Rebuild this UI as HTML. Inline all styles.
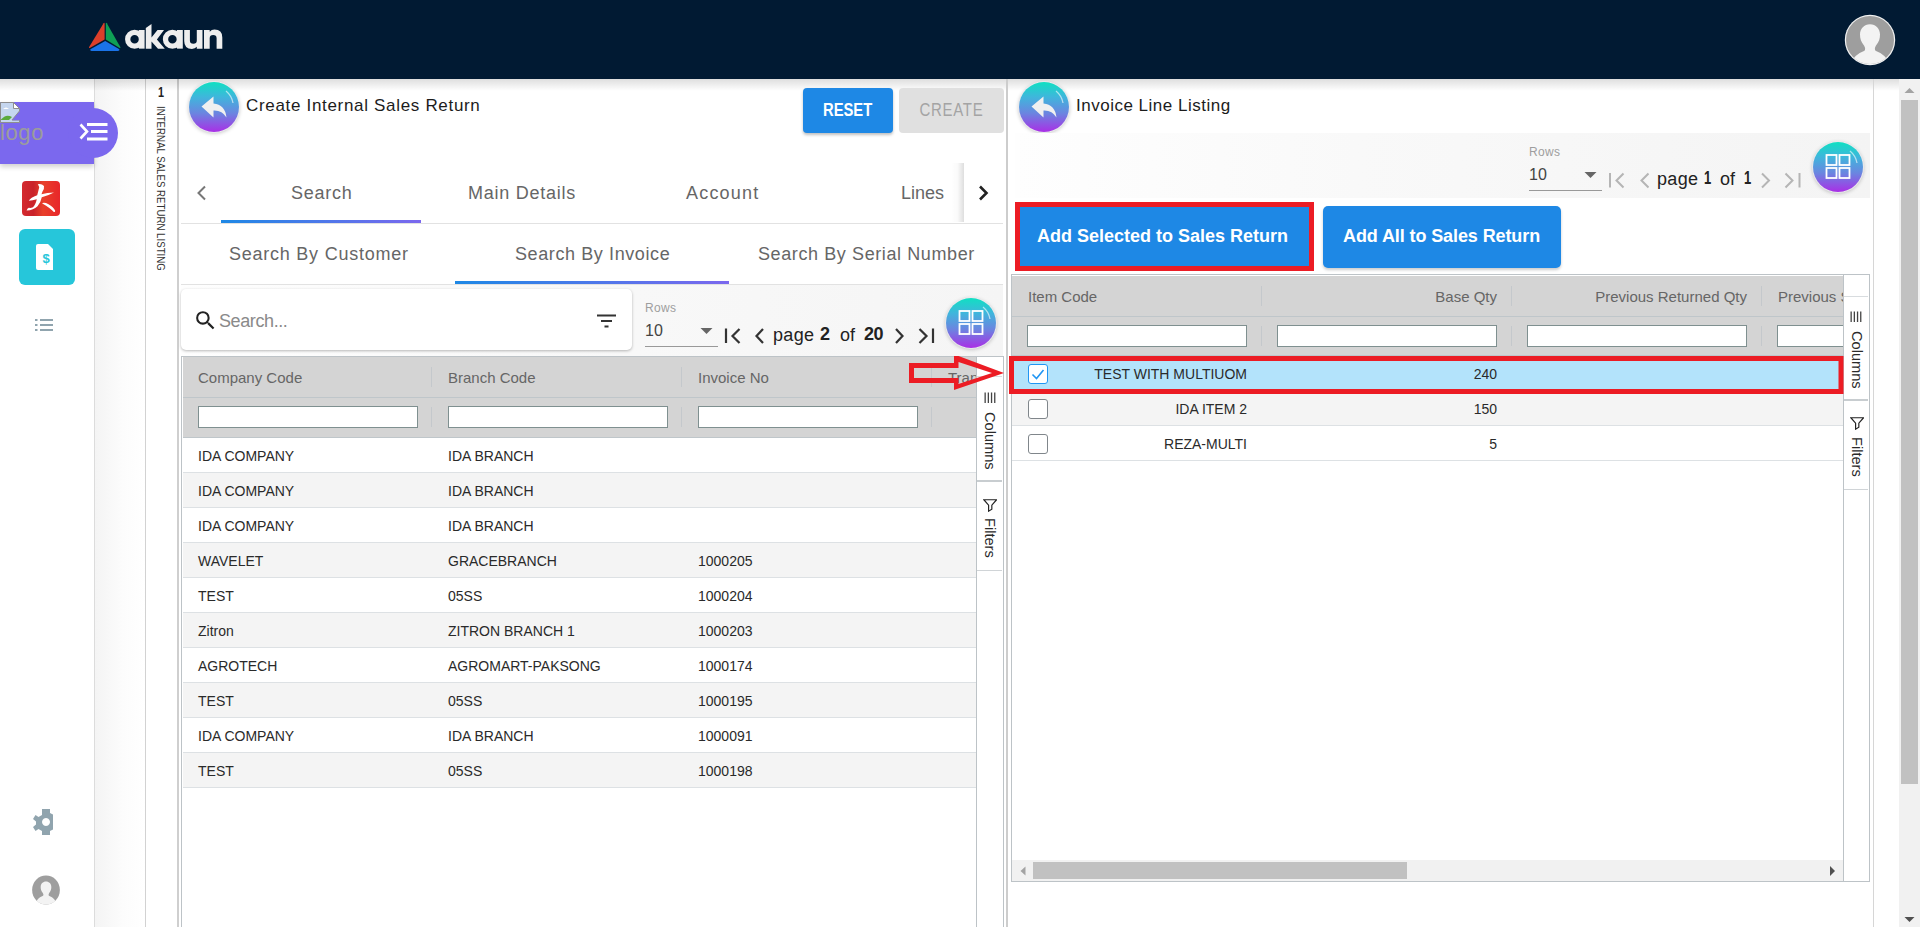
<!DOCTYPE html>
<html><head><meta charset="utf-8">
<style>
*{box-sizing:border-box;margin:0;padding:0}
html,body{width:1920px;height:927px;overflow:hidden;background:#fff;font-family:"Liberation Sans",sans-serif;position:relative}
.a{position:absolute}
.t{position:absolute;white-space:nowrap;line-height:1}
</style></head><body>

<!-- HEADER -->
<div class="a" style="left:0;top:0;width:1920px;height:79px;background:#011a33"></div>
<svg class="a" style="left:0;top:0" width="240" height="79" viewBox="0 0 240 79">
  <path d="M103.6 23.2 Q104.6 22 104.6 23.8 L104.6 39.4 L90.2 47.8 Q88.4 48.6 89.1 46.9 Z" fill="#dc3f2a"/>
  <path d="M105.8 23.8 Q105.8 22 106.8 23.2 L120.3 46.9 Q121 48.6 119.2 47.8 L105.8 39.6 Z" fill="#0fa055"/>
  <path d="M105.2 40.9 L119.4 49.2 Q119.8 50.9 118 50.9 L91.6 50.9 Q89.8 50.9 90.4 49.2 Z" fill="#1a73e8"/>
  <g fill="#eeeeee">
    <circle cx="134.6" cy="39.3" r="6.9" stroke="#eeeeee" stroke-width="5.3" fill="none"/>
    <rect x="138.9" y="30" width="5.7" height="18.65"/>
    <path d="M145.8 28 L151.5 24 L151.5 37.5 L157.5 30 L164 30 L156.9 39.6 L164.8 48.65 L158 48.65 L151.5 41.5 L151.5 48.65 L145.8 48.65 Z"/>
    <circle cx="172.4" cy="39.3" r="6.9" stroke="#eeeeee" stroke-width="5.3" fill="none"/>
    <rect x="177" y="30" width="5.8" height="18.65"/>
    <path d="M184.2 30 H189.9 V40.5 Q189.9 43.8 193.35 43.8 Q196.8 43.8 196.8 40.5 V30 H202.5 V48.65 H196.8 V46.8 Q195 48.9 192 48.9 Q184.2 48.9 184.2 41 Z"/>
    <path d="M204 48.65 H209.7 V38.2 Q209.7 34.9 213.15 34.9 Q216.6 34.9 216.6 38.2 V48.65 H222.3 V37.5 Q222.3 29.6 214.5 29.6 Q211.5 29.6 209.7 31.8 V30 H204 Z"/>
  </g>
</svg>
<svg class="a" style="left:1840px;top:10px" width="60" height="60" viewBox="1840 10 60 60">
  <defs><clipPath id="avc"><circle cx="1870" cy="40" r="24"/></clipPath></defs>
  <circle cx="1870" cy="40" r="25.2" fill="#f2f2f2"/>
  <circle cx="1870" cy="40" r="24" fill="#9e9e9e"/>
  <path clip-path="url(#avc)" fill="#f3f3f3" d="M1849 72 Q1850 56 1864.5 50.8 Q1866 48.5 1864 45.5 C1861 42 1860 38.5 1860 34.5 C1860 28.5 1864.2 24.2 1870 24.2 C1875.8 24.2 1880 28.5 1880 34.5 C1880 38.5 1879 42 1876 45.5 Q1874 48.5 1875.5 50.8 Q1890 56 1891 72 Z"/>
</svg>

<!-- LEFT SIDEBAR -->
<div class="a" style="left:94px;top:79px;width:1px;height:848px;background:#dcdcdc"></div>
<div class="a" style="left:95px;top:79px;width:50px;height:848px;background:linear-gradient(to right,#f4f4f4,#fcfcfc 55%,#fff)"></div>
<div class="a" style="left:145px;top:79px;width:1px;height:848px;background:#d2d2d2"></div>
<div class="a" style="left:177px;top:79px;width:2px;height:848px;background:#cfcfcf"></div>

<!-- top shadow under header -->
<div class="a" style="left:0;top:79px;width:1899px;height:12px;background:linear-gradient(to bottom,rgba(0,0,0,.13),rgba(0,0,0,0))"></div>

<!-- purple menu tab -->
<div class="a" style="left:0;top:102px;width:94px;height:62px;background:#7b68ee;box-shadow:0 3px 5px rgba(0,0,0,.18)"></div>
<div class="a" style="left:68px;top:108px;width:50px;height:50px;border-radius:50%;background:#7b68ee"></div>
<svg class="a" style="left:0;top:102px" width="21" height="21" viewBox="0 0 21 21">
  <path d="M0.5 0.5 H13.5 L19.5 6.5 V9 L12 18 L19.5 18 V20.5 H0.5 Z" fill="#c5d6ef" stroke="#8e8e8e" stroke-width="1"/>
  <path d="M13.5 0.5 V6.5 H19.5 Z" fill="#fff" stroke="#8e8e8e" stroke-width="1"/>
  <path d="M3 7 Q6 4 9 7 Z" fill="#fff"/>
  <path d="M1 17.5 Q6 11.5 12 15 L9 18 L1 18 Z" fill="#5aaa3c"/>
  <path d="M19.5 10 L12.5 18.3 L19.5 18.3 Z" fill="#7b68ee"/>
</svg>
<div class="t" style="left:0;top:122px;font-size:22px;color:#9c9c9c;letter-spacing:0.6px">logo</div>
<svg class="a" style="left:78px;top:122px" width="30" height="20" viewBox="0 0 30 20">
  <path d="M2.5 2.5 L9 9.5 L2.5 16.5" stroke="#fff" stroke-width="2.6" fill="none"/>
  <rect x="9" y="1" width="20.5" height="3" fill="#fff"/>
  <rect x="13" y="8" width="16.5" height="3" fill="#fff"/>
  <rect x="9" y="15.5" width="20.5" height="3" fill="#fff"/>
</svg>

<!-- sidebar icons -->
<div class="a" style="left:22px;top:181px;width:38px;height:35px;border-radius:4px;background:linear-gradient(to right,#d42a2f,#c9222a 30%,#e8402a 55%,#e8262a)"></div>
<svg class="a" style="left:22px;top:181px" width="38" height="35" viewBox="0 0 38 35">
  <path fill="#fff" d="M15.8 3.2 Q19.5 2.2 22 5 Q22.5 7.5 20.5 10.5 L19.5 13.2 Q25 11.8 32 11.6 Q27.5 14.2 19.8 16.2 Q18.8 21.5 15.5 25.2 Q11.5 29 4.6 29.6 Q5.2 27.3 6.8 26.8 Q8.8 27.2 10.5 26.5 Q13.5 24.2 14.8 18.2 Q10.5 19.2 6.8 19.8 Q8.5 16.5 15.2 14.2 Q16.5 9.5 17.2 6.2 Q16.8 4.5 15.8 3.2 Z"/>
  <path fill="#fff" d="M20 22.2 Q22.5 21.2 26.5 23.2 Q31.5 25.8 33.2 29.8 Q33.2 31.5 31.8 31 Q28.5 27.2 20 22.2 Z"/>
</svg>
<div class="a" style="left:19px;top:229px;width:56px;height:56px;border-radius:6px;background:#26c6da"></div>
<svg class="a" style="left:36px;top:244px" width="17" height="26" viewBox="0 0 17 26">
  <path d="M2 0 L12 0 L17 5 L17 26 L2 26 Q0 26 0 24 L0 2 Q0 0 2 0 Z" fill="#fff"/>
  <text x="10" y="18.5" font-family="Liberation Sans" font-weight="700" font-size="13" fill="#26c6da" text-anchor="middle">$</text>
</svg>
<svg class="a" style="left:35px;top:318px" width="18" height="14" viewBox="0 0 18 14">
  <rect x="0" y="1" width="2.5" height="2" fill="#90a4ae"/><rect x="5" y="1" width="13" height="2" fill="#90a4ae"/>
  <rect x="0" y="6" width="2.5" height="2" fill="#90a4ae"/><rect x="5" y="6" width="13" height="2" fill="#90a4ae"/>
  <rect x="0" y="11" width="2.5" height="2" fill="#90a4ae"/><rect x="5" y="11" width="13" height="2" fill="#90a4ae"/>
</svg>
<svg class="a" style="left:33px;top:809px" width="20" height="26" viewBox="0 0 20 26">
  <path fill="#90a4ae" fill-rule="evenodd" d="M9 0 h8 v4 l3 1.5 v15 l-3 1.5 v4 h-8 v-4 l-3.5 -2 -3 2 -2.5 -4 3 -2.5 v-3 l-3 -2.5 2.5 -4 3 2 3.5 -2 z M13 9 a4 4 0 1 0 0.01 0 z"/>
</svg>
<svg class="a" style="left:30px;top:874px" width="32" height="32" viewBox="1840 10 60 60">
  <defs><clipPath id="avc2"><circle cx="1870" cy="40" r="27"/></clipPath></defs>
  <ellipse cx="1870" cy="40" rx="26" ry="27" fill="#9e9e9e"/>
  <path clip-path="url(#avc2)" fill="#f3f3f3" d="M1849 72 Q1850 56 1864.5 50.8 Q1866 48.5 1864 45.5 C1861 42 1860 38.5 1860 34.5 C1860 28.5 1864.2 24.2 1870 24.2 C1875.8 24.2 1880 28.5 1880 34.5 C1880 38.5 1879 42 1876 45.5 Q1874 48.5 1875.5 50.8 Q1890 56 1891 72 Z"/>
</svg>

<!-- vertical tab text -->
<div class="t" style="left:157.5px;top:84px;font-size:15px;font-weight:700;color:#222;transform-origin:0 0;transform:scaleX(0.72)">1</div>
<div class="t" style="left:166px;top:106px;font-size:11px;color:#333;transform-origin:0 0;transform:rotate(90deg) scaleX(0.88)">INTERNAL SALES RETURN LISTING</div>

<!-- LEFT PANEL -->

<!-- back button left -->
<div class="a" style="left:189px;top:82px;width:50px;height:50px;border-radius:50%;background:linear-gradient(to bottom,#10e0c2 0%,#3fb6dc 30%,#6a86e0 62%,#a92fe6 100%);box-shadow:0 0 0 1px rgba(235,235,240,.9),0 1px 4px rgba(0,0,0,.3)"></div>
<svg class="a" style="left:189px;top:82px" width="50" height="50" viewBox="0 0 50 50">
  <path d="M37 9 A 20 20 0 0 1 44 21" stroke="rgba(255,255,255,.6)" stroke-width="1.3" fill="none"/>
  <path d="M24.5 14.5 L12.5 24.5 L24.5 35.5 L24.5 28.5 Q33 28 37.5 35.5 Q36 22.5 24.5 21.5 Z" fill="#f0f0f0"/>
</svg>
<div class="t" style="left:246px;top:97px;font-size:17px;color:#1c1c1c;letter-spacing:0.68px">Create Internal Sales Return</div>

<div class="a" style="left:803px;top:88px;width:90px;height:45px;border-radius:4px;background:#1e88e5;box-shadow:0 2px 3px rgba(0,0,0,.25)"></div>
<div class="t" style="left:823px;top:101px;font-size:18px;font-weight:700;color:#fff;transform-origin:0 0;transform:scaleX(0.82)">RESET</div>
<div class="a" style="left:899px;top:88px;width:105px;height:45px;border-radius:4px;background:#e0e0e0"></div>
<div class="t" style="left:919.5px;top:100.5px;font-size:15px;color:#a4a4a4;letter-spacing:0.7px;transform-origin:0 0;transform:scaleY(1.19)">CREATE</div>

<!-- tabs -->
<svg class="a" style="left:195px;top:185px" width="14" height="16" viewBox="0 0 14 16"><path d="M10 1.5 L3.5 8 L10 14.5" stroke="#777" stroke-width="2" fill="none"/></svg>
<div class="t" style="left:291px;top:184px;font-size:18px;color:#666;letter-spacing:0.75px">Search</div>
<div class="t" style="left:468px;top:184px;font-size:18px;color:#666;letter-spacing:0.75px">Main Details</div>
<div class="t" style="left:686px;top:184px;font-size:18px;color:#666;letter-spacing:1.2px">Account</div>
<div class="t" style="left:901px;top:184px;font-size:18px;color:#666;letter-spacing:0px">Lines</div>
<div class="a" style="left:951px;top:163px;width:13px;height:59px;background:linear-gradient(to right,rgba(0,0,0,0),rgba(0,0,0,.02) 50%,rgba(0,0,0,.13))"></div>
<svg class="a" style="left:976px;top:185px" width="14" height="16" viewBox="0 0 14 16"><path d="M4 1.5 L10.5 8 L4 14.5" stroke="#222" stroke-width="2.6" fill="none"/></svg>
<div class="a" style="left:221px;top:220px;width:200px;height:3px;background:linear-gradient(to right,#1e88e5,#7b68ee)"></div>
<div class="a" style="left:181px;top:223px;width:822px;height:1px;background:#e2e2e2"></div>

<div class="t" style="left:229px;top:245px;font-size:18px;color:#666;letter-spacing:0.76px">Search By Customer</div>
<div class="t" style="left:515px;top:245px;font-size:18px;color:#666;letter-spacing:0.6px">Search By Invoice</div>
<div class="t" style="left:758px;top:245px;font-size:18px;color:#666;letter-spacing:0.6px">Search By Serial Number</div>
<div class="a" style="left:455px;top:281px;width:274px;height:3px;background:linear-gradient(to right,#1e88e5,#7b68ee)"></div>
<div class="a" style="left:181px;top:284px;width:822px;height:1px;background:#e2e2e2"></div>

<!-- toolbar -->
<div class="a" style="left:181px;top:285px;width:822px;height:71px;background:linear-gradient(to right,#fefefe,#f9f9f9 40%,#f5f5f5)"></div>
<div class="a" style="left:181px;top:289px;width:451px;height:61px;border-radius:5px;background:#fff;box-shadow:0 1px 3px rgba(0,0,0,.28)"></div>
<svg class="a" style="left:193px;top:308px" width="25" height="25" viewBox="0 0 24 24"><path fill="#222" d="M15.5 14h-.79l-.28-.27A6.47 6.47 0 0 0 16 9.5 6.5 6.5 0 1 0 9.5 16c1.61 0 3.09-.59 4.23-1.57l.27.28v.79l5 4.99L20.49 19l-4.99-5zm-6 0C7.01 14 5 11.99 5 9.5S7.01 5 9.5 5 14 7.01 14 9.5 11.99 14 9.5 14z"/></svg>
<div class="t" style="left:219px;top:312px;font-size:18px;color:#8a8a8a;letter-spacing:-0.4px">Search...</div>
<svg class="a" style="left:597px;top:314px" width="20" height="14" viewBox="0 0 20 14"><rect x="0" y="0.5" width="19" height="2" fill="#333"/><rect x="4" y="6" width="11" height="2" fill="#333"/><rect x="7.5" y="11.5" width="4" height="2" fill="#333"/></svg>

<div class="t" style="left:645px;top:302px;font-size:12px;color:#9e9e9e;letter-spacing:0.3px">Rows</div>
<div class="t" style="left:645px;top:323px;font-size:16px;color:#444">10</div>
<svg class="a" style="left:700px;top:327px" width="14" height="8"><path d="M0.5 1 L12.5 1 L6.5 7 Z" fill="#666"/></svg>
<div class="a" style="left:645px;top:346px;width:73px;height:1px;background:#999"></div>
<svg class="a" style="left:722px;top:326px" width="220" height="20" viewBox="0 0 220 20">
  <g stroke="#333" stroke-width="2.2" fill="none">
    <path d="M4 2.5 V17"/><path d="M17.5 3 L10.5 10 L17.5 17"/>
    <path d="M41 3 L34.5 10 L41 17"/>
    <path d="M174 3 L180.5 10 L174 17"/>
    <path d="M197.5 3 L204.5 10 L197.5 17"/><path d="M211 2.5 V17"/>
  </g>
</svg>
<div class="t" style="left:773px;top:326px;font-size:18px;color:#222;letter-spacing:0.35px">page</div>
<div class="t" style="left:820px;top:325px;font-size:18px;font-weight:700;color:#222">2</div>
<div class="t" style="left:840px;top:326px;font-size:18px;color:#222">of</div>
<div class="t" style="left:864px;top:325px;font-size:18px;font-weight:700;color:#222;letter-spacing:-0.5px">20</div>
<div class="a" style="left:946px;top:298px;width:50px;height:50px;border-radius:50%;background:linear-gradient(to bottom,#10e0c2 0%,#3fb6dc 30%,#6a86e0 62%,#a92fe6 100%);box-shadow:0 0 0 1px rgba(235,235,240,.9),0 1px 4px rgba(0,0,0,.3)"></div>
<svg class="a" style="left:946px;top:298px" width="50" height="50" viewBox="0 0 50 50">
  <path d="M37 9 A 20 20 0 0 1 44 21" stroke="rgba(255,255,255,.6)" stroke-width="1.3" fill="none"/>
  <g stroke="#fff" stroke-width="1.8" fill="none"><rect x="13.5" y="13" width="10" height="10"/><rect x="26.5" y="13" width="10" height="10"/><rect x="13.5" y="26" width="10" height="10"/><rect x="26.5" y="26" width="10" height="10"/></g>
</svg>

<!-- LEFT GRID -->
<div class="a" style="left:181px;top:356px;width:823px;height:571px;border:1px solid #bdc3c7;border-bottom:none;background:#fff"></div>
<div class="a" style="left:183px;top:357px;width:794px;height:80px;background:#d4d4d4"></div>
<div class="a" style="left:183px;top:397px;width:794px;height:1px;background:#bfc6ca"></div>
<div class="a" style="left:183px;top:437px;width:794px;height:1px;background:#bfc6ca"></div>
<div class="t" style="left:198px;top:370px;font-size:15px;color:#666">Company Code</div>
<div class="t" style="left:448px;top:370px;font-size:15px;color:#666">Branch Code</div>
<div class="t" style="left:698px;top:370px;font-size:15px;color:#666">Invoice No</div>
<div class="t" style="left:948px;top:370px;font-size:15px;color:#666">Tran</div>
<div class="a" style="left:431px;top:367px;width:1px;height:20px;background:#c4c8cc"></div>
<div class="a" style="left:681px;top:367px;width:1px;height:20px;background:#c4c8cc"></div>
<div class="a" style="left:931px;top:367px;width:1px;height:20px;background:#c4c8cc"></div>
<div class="a" style="left:431px;top:407px;width:1px;height:20px;background:#c4c8cc"></div>
<div class="a" style="left:681px;top:407px;width:1px;height:20px;background:#c4c8cc"></div>
<div class="a" style="left:931px;top:407px;width:1px;height:20px;background:#c4c8cc"></div>
<div class="a" style="left:198px;top:406px;width:220px;height:22px;background:#fff;border:1px solid #7f9090"></div>
<div class="a" style="left:448px;top:406px;width:220px;height:22px;background:#fff;border:1px solid #7f9090"></div>
<div class="a" style="left:698px;top:406px;width:220px;height:22px;background:#fff;border:1px solid #7f9090"></div>
<div class="a" style="left:183px;top:438px;width:794px;height:34px;background:#fff"></div>
<div class="a" style="left:183px;top:472px;width:794px;height:1px;background:#dde1e4"></div>
<div class="t" style="left:198px;top:449px;font-size:14px;color:#2a2a2a">IDA COMPANY</div>
<div class="t" style="left:448px;top:449px;font-size:14px;color:#2a2a2a">IDA BRANCH</div>
<div class="a" style="left:183px;top:473px;width:794px;height:34px;background:#f4f4f4"></div>
<div class="a" style="left:183px;top:507px;width:794px;height:1px;background:#dde1e4"></div>
<div class="t" style="left:198px;top:484px;font-size:14px;color:#2a2a2a">IDA COMPANY</div>
<div class="t" style="left:448px;top:484px;font-size:14px;color:#2a2a2a">IDA BRANCH</div>
<div class="a" style="left:183px;top:508px;width:794px;height:34px;background:#fff"></div>
<div class="a" style="left:183px;top:542px;width:794px;height:1px;background:#dde1e4"></div>
<div class="t" style="left:198px;top:519px;font-size:14px;color:#2a2a2a">IDA COMPANY</div>
<div class="t" style="left:448px;top:519px;font-size:14px;color:#2a2a2a">IDA BRANCH</div>
<div class="a" style="left:183px;top:543px;width:794px;height:34px;background:#f4f4f4"></div>
<div class="a" style="left:183px;top:577px;width:794px;height:1px;background:#dde1e4"></div>
<div class="t" style="left:198px;top:554px;font-size:14px;color:#2a2a2a">WAVELET</div>
<div class="t" style="left:448px;top:554px;font-size:14px;color:#2a2a2a">GRACEBRANCH</div>
<div class="t" style="left:698px;top:554px;font-size:14px;color:#2a2a2a">1000205</div>
<div class="a" style="left:183px;top:578px;width:794px;height:34px;background:#fff"></div>
<div class="a" style="left:183px;top:612px;width:794px;height:1px;background:#dde1e4"></div>
<div class="t" style="left:198px;top:589px;font-size:14px;color:#2a2a2a">TEST</div>
<div class="t" style="left:448px;top:589px;font-size:14px;color:#2a2a2a">05SS</div>
<div class="t" style="left:698px;top:589px;font-size:14px;color:#2a2a2a">1000204</div>
<div class="a" style="left:183px;top:613px;width:794px;height:34px;background:#f4f4f4"></div>
<div class="a" style="left:183px;top:647px;width:794px;height:1px;background:#dde1e4"></div>
<div class="t" style="left:198px;top:624px;font-size:14px;color:#2a2a2a">Zitron</div>
<div class="t" style="left:448px;top:624px;font-size:14px;color:#2a2a2a">ZITRON BRANCH 1</div>
<div class="t" style="left:698px;top:624px;font-size:14px;color:#2a2a2a">1000203</div>
<div class="a" style="left:183px;top:648px;width:794px;height:34px;background:#fff"></div>
<div class="a" style="left:183px;top:682px;width:794px;height:1px;background:#dde1e4"></div>
<div class="t" style="left:198px;top:659px;font-size:14px;color:#2a2a2a">AGROTECH</div>
<div class="t" style="left:448px;top:659px;font-size:14px;color:#2a2a2a">AGROMART-PAKSONG</div>
<div class="t" style="left:698px;top:659px;font-size:14px;color:#2a2a2a">1000174</div>
<div class="a" style="left:183px;top:683px;width:794px;height:34px;background:#f4f4f4"></div>
<div class="a" style="left:183px;top:717px;width:794px;height:1px;background:#dde1e4"></div>
<div class="t" style="left:198px;top:694px;font-size:14px;color:#2a2a2a">TEST</div>
<div class="t" style="left:448px;top:694px;font-size:14px;color:#2a2a2a">05SS</div>
<div class="t" style="left:698px;top:694px;font-size:14px;color:#2a2a2a">1000195</div>
<div class="a" style="left:183px;top:718px;width:794px;height:34px;background:#fff"></div>
<div class="a" style="left:183px;top:752px;width:794px;height:1px;background:#dde1e4"></div>
<div class="t" style="left:198px;top:729px;font-size:14px;color:#2a2a2a">IDA COMPANY</div>
<div class="t" style="left:448px;top:729px;font-size:14px;color:#2a2a2a">IDA BRANCH</div>
<div class="t" style="left:698px;top:729px;font-size:14px;color:#2a2a2a">1000091</div>
<div class="a" style="left:183px;top:753px;width:794px;height:34px;background:#f4f4f4"></div>
<div class="a" style="left:183px;top:787px;width:794px;height:1px;background:#dde1e4"></div>
<div class="t" style="left:198px;top:764px;font-size:14px;color:#2a2a2a">TEST</div>
<div class="t" style="left:448px;top:764px;font-size:14px;color:#2a2a2a">05SS</div>
<div class="t" style="left:698px;top:764px;font-size:14px;color:#2a2a2a">1000198</div>

<!-- left grid side bar -->
<div class="a" style="left:976px;top:357px;width:27px;height:570px;background:#fff;border-left:1px solid #bdc3c7"></div>
<div class="a" style="left:977px;top:376px;width:25px;height:1px;background:#d8dcdf"></div>
<div class="a" style="left:977px;top:480px;width:25px;height:2px;background:#c8cdd0"></div>
<div class="a" style="left:977px;top:570px;width:25px;height:1px;background:#d0d4d7"></div>
<svg class="a" style="left:984px;top:392px" width="12" height="12" viewBox="0 0 12 12"><g fill="#444"><rect x="0.5" y="0.5" width="1.3" height="10.5"/><rect x="3.7" y="0.5" width="1.3" height="10.5"/><rect x="6.9" y="0.5" width="1.3" height="10.5"/><rect x="10.1" y="0.5" width="1.3" height="10.5"/></g></svg>
<div class="t" style="left:997px;top:412px;font-size:14.6px;color:#2a2a2a;transform-origin:0 0;transform:rotate(90deg)">Columns</div>
<svg class="a" style="left:983px;top:498px" width="14" height="14" viewBox="0 0 13 13"><path d="M0.8 1.6 L12.6 1.6 L8.2 6.6 L8.2 10.4 L5.2 12.2 L5.2 6.6 Z" stroke="#222" stroke-width="1.1" fill="none"/></svg>
<div class="t" style="left:997px;top:518px;font-size:14.6px;color:#2a2a2a;transform-origin:0 0;transform:rotate(90deg)">Filters</div>

<!-- panel separator -->
<div class="a" style="left:1006px;top:79px;width:2px;height:848px;background:#cdcdcd"></div>


<!-- RIGHT PANEL -->

<!-- back button right -->
<div class="a" style="left:1019px;top:82px;width:50px;height:50px;border-radius:50%;background:linear-gradient(to bottom,#10e0c2 0%,#3fb6dc 30%,#6a86e0 62%,#a92fe6 100%);box-shadow:0 0 0 1px rgba(235,235,240,.9),0 1px 4px rgba(0,0,0,.3)"></div>
<svg class="a" style="left:1019px;top:82px" width="50" height="50" viewBox="0 0 50 50">
  <path d="M37 9 A 20 20 0 0 1 44 21" stroke="rgba(255,255,255,.6)" stroke-width="1.3" fill="none"/>
  <path d="M24.5 14.5 L12.5 24.5 L24.5 35.5 L24.5 28.5 Q33 28 37.5 35.5 Q36 22.5 24.5 21.5 Z" fill="#f0f0f0"/>
</svg>
<div class="t" style="left:1076px;top:97px;font-size:17px;color:#1c1c1c;letter-spacing:0.5px">Invoice Line Listing</div>

<!-- toolbar -->
<div class="a" style="left:1015px;top:133px;width:855px;height:65px;background:linear-gradient(to right,#fefefe,#f9f9f9 40%,#f4f4f4)"></div>
<div class="t" style="left:1529px;top:146px;font-size:12px;color:#9e9e9e;letter-spacing:0.3px">Rows</div>
<div class="t" style="left:1529px;top:167px;font-size:16px;color:#444">10</div>
<svg class="a" style="left:1584px;top:171px" width="14" height="8"><path d="M0.5 1 L12.5 1 L6.5 7 Z" fill="#666"/></svg>
<div class="a" style="left:1529px;top:190px;width:73px;height:1px;background:#999"></div>
<svg class="a" style="left:1606px;top:170px" width="200" height="20" viewBox="0 0 200 20">
  <g stroke="#b5b5b5" stroke-width="2" fill="none">
    <path d="M4 3 V17.5"/><path d="M17.5 3.5 L10.5 10.5 L17.5 17.5"/>
    <path d="M42.5 3.5 L35.5 10.5 L42.5 17.5"/>
    <path d="M156 3.5 L163 10.5 L156 17.5"/>
    <path d="M179.5 3.5 L186.5 10.5 L179.5 17.5"/><path d="M193.5 3 V17.5"/>
  </g>
</svg>
<div class="t" style="left:1657px;top:170px;font-size:18px;color:#222;letter-spacing:0.35px">page</div>
<div class="t" style="left:1704px;top:169px;font-size:18px;font-weight:700;color:#222;transform-origin:0 0;transform:scaleX(0.72)">1</div>
<div class="t" style="left:1720px;top:170px;font-size:18px;color:#222">of</div>
<div class="t" style="left:1744px;top:169px;font-size:18px;font-weight:700;color:#222;transform-origin:0 0;transform:scaleX(0.72)">1</div>
<div class="a" style="left:1813px;top:142px;width:50px;height:50px;border-radius:50%;background:linear-gradient(to bottom,#10e0c2 0%,#3fb6dc 30%,#6a86e0 62%,#a92fe6 100%);box-shadow:0 0 0 1px rgba(235,235,240,.9),0 1px 4px rgba(0,0,0,.3)"></div>
<svg class="a" style="left:1813px;top:142px" width="50" height="50" viewBox="0 0 50 50">
  <path d="M37 9 A 20 20 0 0 1 44 21" stroke="rgba(255,255,255,.6)" stroke-width="1.3" fill="none"/>
  <g stroke="#fff" stroke-width="1.8" fill="none"><rect x="13.5" y="13" width="10" height="10"/><rect x="26.5" y="13" width="10" height="10"/><rect x="13.5" y="26" width="10" height="10"/><rect x="26.5" y="26" width="10" height="10"/></g>
</svg>

<!-- buttons -->
<div class="a" style="left:1020px;top:207px;width:289px;height:59px;background:#1e88e5"></div>
<div class="a" style="left:1015px;top:202px;width:299px;height:69px;border:5px solid #ec1c24"></div>
<div class="t" style="left:1037px;top:227px;font-size:18px;font-weight:700;color:#fff;letter-spacing:0px">Add Selected to Sales Return</div>
<div class="a" style="left:1323px;top:206px;width:238px;height:62px;border-radius:5px;background:#1e88e5;box-shadow:0 2px 3px rgba(0,0,0,.2)"></div>
<div class="t" style="left:1343px;top:227px;font-size:18px;font-weight:700;color:#fff;letter-spacing:-0.1px">Add All to Sales Return</div>

<!-- RIGHT GRID -->
<div class="a" style="left:1011px;top:274px;width:859px;height:608px;border:1px solid #bdc3c7;background:#fff"></div>
<div class="a" style="left:1012px;top:276px;width:832px;height:80px;background:#d4d4d4"></div>
<div class="a" style="left:1012px;top:316px;width:832px;height:1px;background:#bfc6ca"></div>
<div class="a" style="left:1012px;top:355px;width:832px;height:1px;background:#bfc6ca"></div>
<div class="t" style="left:1028px;top:289px;font-size:15px;color:#666">Item Code</div>
<div class="t" style="left:1497px;top:289px;font-size:15px;color:#666;transform:translateX(-100%)">Base Qty</div>
<div class="t" style="left:1747px;top:289px;font-size:15px;color:#666;transform:translateX(-100%)">Previous Returned Qty</div>
<div class="t" style="left:1778px;top:289px;font-size:15px;color:#666;width:66px;overflow:hidden">Previous S</div>
<div class="a" style="left:1261px;top:286px;width:1px;height:20px;background:#c4c8cc"></div>
<div class="a" style="left:1511px;top:286px;width:1px;height:20px;background:#c4c8cc"></div>
<div class="a" style="left:1761px;top:286px;width:1px;height:20px;background:#c4c8cc"></div>
<div class="a" style="left:1261px;top:326px;width:1px;height:20px;background:#c4c8cc"></div>
<div class="a" style="left:1511px;top:326px;width:1px;height:20px;background:#c4c8cc"></div>
<div class="a" style="left:1761px;top:326px;width:1px;height:20px;background:#c4c8cc"></div>
<div class="a" style="left:1027px;top:325px;width:220px;height:22px;background:#fff;border:1px solid #7f9090"></div>
<div class="a" style="left:1277px;top:325px;width:220px;height:22px;background:#fff;border:1px solid #7f9090"></div>
<div class="a" style="left:1527px;top:325px;width:220px;height:22px;background:#fff;border:1px solid #7f9090"></div>
<div class="a" style="left:1777px;top:325px;width:67px;height:22px;background:#fff;border:1px solid #7f9090;border-right:none"></div>
<div class="a" style="left:1012px;top:356px;width:832px;height:34px;background:#b3e3fb"></div>
<div class="a" style="left:1012px;top:390px;width:832px;height:1px;background:#dde1e4"></div>
<div class="a" style="left:1028px;top:364px;width:20px;height:20px;border-radius:3px;background:#fff;border:1.5px solid #2196f3"></div>
<svg class="a" style="left:1028px;top:364px" width="20" height="20"><path d="M4.5 10.5 L8.5 14.5 L15.5 6" stroke="#2196f3" stroke-width="1.6" fill="none"/></svg>
<div class="t" style="left:1247px;top:367px;font-size:14px;color:#2a2a2a;transform:translateX(-100%)">TEST WITH MULTIUOM</div>
<div class="t" style="left:1497px;top:367px;font-size:14px;color:#2a2a2a;transform:translateX(-100%)">240</div>
<div class="a" style="left:1012px;top:391px;width:832px;height:34px;background:#f4f4f4"></div>
<div class="a" style="left:1012px;top:425px;width:832px;height:1px;background:#dde1e4"></div>
<div class="a" style="left:1028px;top:399px;width:20px;height:20px;border-radius:3px;background:#fff;border:1.5px solid #80868b"></div>
<div class="t" style="left:1247px;top:402px;font-size:14px;color:#2a2a2a;transform:translateX(-100%)">IDA ITEM 2</div>
<div class="t" style="left:1497px;top:402px;font-size:14px;color:#2a2a2a;transform:translateX(-100%)">150</div>
<div class="a" style="left:1012px;top:426px;width:832px;height:34px;background:#fff"></div>
<div class="a" style="left:1012px;top:460px;width:832px;height:1px;background:#dde1e4"></div>
<div class="a" style="left:1028px;top:434px;width:20px;height:20px;border-radius:3px;background:#fff;border:1.5px solid #80868b"></div>
<div class="t" style="left:1247px;top:437px;font-size:14px;color:#2a2a2a;transform:translateX(-100%)">REZA-MULTI</div>
<div class="t" style="left:1497px;top:437px;font-size:14px;color:#2a2a2a;transform:translateX(-100%)">5</div>

<!-- h scrollbar -->
<div class="a" style="left:1012px;top:860px;width:832px;height:21px;background:#f1f1f1"></div>
<div class="a" style="left:1033px;top:862px;width:374px;height:17px;background:#c1c1c1"></div>
<svg class="a" style="left:1018px;top:864px" width="12" height="14"><path d="M7.5 2.5 L7.5 11.5 L2.5 7 Z" fill="#a3a3a3"/></svg>
<svg class="a" style="left:1826px;top:864px" width="12" height="14"><path d="M4 2 L4 12 L9 7 Z" fill="#505050"/></svg>

<!-- right side bar -->
<div class="a" style="left:1843px;top:275px;width:26px;height:606px;background:#fff;border-left:1px solid #bdc3c7"></div>
<div class="a" style="left:1844px;top:296px;width:24px;height:1px;background:#d8dcdf"></div>
<div class="a" style="left:1844px;top:399px;width:24px;height:2px;background:#c8cdd0"></div>
<div class="a" style="left:1844px;top:489px;width:24px;height:1px;background:#d0d4d7"></div>
<svg class="a" style="left:1850px;top:311px" width="12" height="12" viewBox="0 0 12 12"><g fill="#444"><rect x="0.5" y="0.5" width="1.3" height="10.5"/><rect x="3.7" y="0.5" width="1.3" height="10.5"/><rect x="6.9" y="0.5" width="1.3" height="10.5"/><rect x="10.1" y="0.5" width="1.3" height="10.5"/></g></svg>
<div class="t" style="left:1864px;top:331px;font-size:14.6px;color:#2a2a2a;transform-origin:0 0;transform:rotate(90deg)">Columns</div>
<svg class="a" style="left:1850px;top:416px" width="14" height="14" viewBox="0 0 13 13"><path d="M0.8 1.6 L12.6 1.6 L8.2 6.6 L8.2 10.4 L5.2 12.2 L5.2 6.6 Z" stroke="#222" stroke-width="1.1" fill="none"/></svg>
<div class="t" style="left:1864px;top:437px;font-size:14.6px;color:#2a2a2a;transform-origin:0 0;transform:rotate(90deg)">Filters</div>

<!-- arrow overlay -->
<svg class="a" style="left:0;top:0" width="1920" height="927">
  <path fill="#ec1c24" fill-rule="evenodd" d="M909 363 L954 363 L954 356 L958.5 356 L1004 373 L954 390 L954 383 L909 383 Z M914 368 L914 378 L958.5 378 L958.5 384 L992 373 L958.5 362 L958.5 368 Z"/>
  <rect x="1011.5" y="358.5" width="829.5" height="33" stroke="#ec1c24" stroke-width="5" fill="none"/>
</svg>


<!-- vertical scrollbar -->
<div class="a" style="left:1873px;top:79px;width:1px;height:848px;background:#d6d6d6"></div>
<div class="a" style="left:1899px;top:79px;width:21px;height:848px;background:#f1f1f1"></div>
<div class="a" style="left:1901px;top:100px;width:17px;height:684px;background:#c1c1c1"></div>
<svg class="a" style="left:1899px;top:84px" width="21" height="12"><path d="M5.5 9 L10.5 4 L15.5 9 Z" fill="#a3a3a3"/></svg>
<svg class="a" style="left:1899px;top:914px" width="21" height="12"><path d="M5.5 3 L15.5 3 L10.5 8 Z" fill="#505050"/></svg>

</body></html>
